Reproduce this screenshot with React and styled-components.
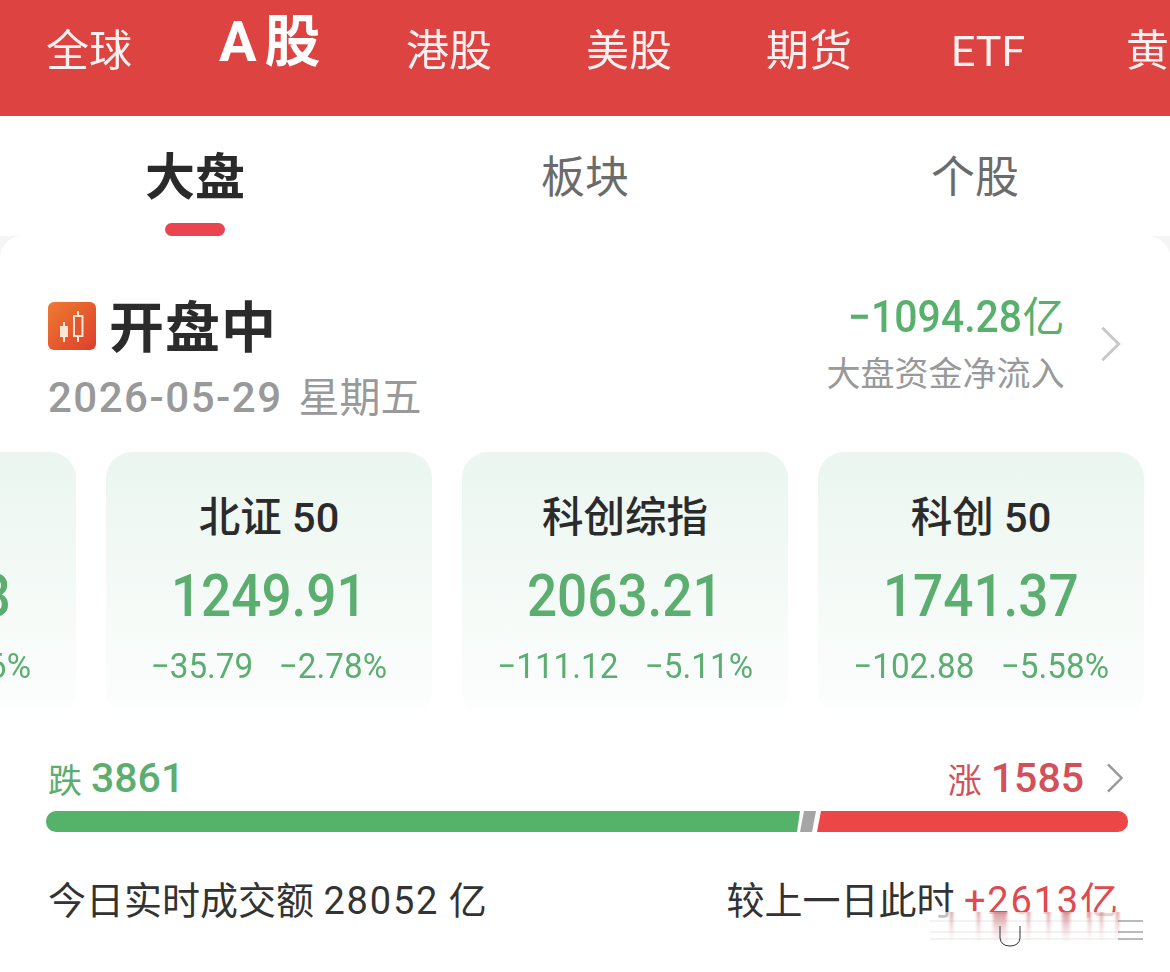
import React from 'react';
import styled, { createGlobalStyle } from 'styled-components';

const GlobalStyle = createGlobalStyle`
  html, body { margin: 0; padding: 0; background: #f5f5f5; }
  body { font-family: "Roboto", "Noto Sans CJK SC", sans-serif; }
  #root { width: 1170px; height: 972px; overflow: hidden; }
`;

const Page = styled.div`
  width: 1170px;
  height: 972px;
  overflow: hidden;
  background: #f5f5f5;
`;

const Market = styled.div`
  height: 116px;
  box-sizing: border-box;
  background: #dc4341;
  display: flex;
  align-items: center;
  padding: 0 0 14px 46px;
  white-space: nowrap;
`;

const MarketTab = styled.div`
  flex: 0 0 auto;
  width: ${(p) => p.$w}px;
  color: #fff;
  font-size: ${(p) => (p.$on ? 56 : 43)}px;
  font-weight: ${(p) => (p.$on ? 700 : 400)};
  word-spacing: ${(p) => (p.$on ? -6 : 0)}px;
  line-height: 1;
  margin-top: ${(p) => (p.$on ? -18 : 0)}px;
  opacity: ${(p) => (p.$on ? 1 : 0.92)};
`;

const SubTabs = styled.div`
  height: 120px;
  background: #fff;
  display: grid;
  grid-template-columns: 390px 390px 390px;
`;

const SubTab = styled.div`
  position: relative;
  display: flex;
  justify-content: center;
  padding-top: 37px;
  font-size: ${(p) => (p.$on ? 50 : 44)}px;
  line-height: 50px;
  font-weight: ${(p) => (p.$on ? 700 : 400)};
  color: ${(p) => (p.$on ? '#2a2a2a' : '#6b6b6b')};
`;

const SubMark = styled.span`
  position: absolute;
  left: 165px;
  top: 107px;
  width: 60px;
  height: 13px;
  border-radius: 7px;
  background: #e9444f;
`;

const Card = styled.div`
  position: relative;
  height: 736px;
  background: #fff;
  border-radius: 22px 22px 0 0;
  overflow: hidden;
`;

const Head = styled.div`
  display: flex;
  justify-content: space-between;
  padding: 60px 48px 0 48px;
  height: 216px;
  box-sizing: border-box;
`;

const TitleRow = styled.div`
  display: flex;
  align-items: center;
  height: 64px;
  gap: 13px;
`;

const IconSlot = styled.span`
  display: flex;
  margin-bottom: 4px;
`;

const Title = styled.div`
  font-size: 55px;
  font-weight: 700;
  line-height: 64px;
  letter-spacing: 1px;
  color: #2b2b2b;
`;

const DateLine = styled.div`
  display: flex;
  align-items: center;
  gap: 16px;
  margin-top: 15px;
  line-height: 46px;
  color: #999;
`;

const DateNum = styled.span`
  font-size: 42px;
  font-weight: 500;
  letter-spacing: 1.5px;
`;

const DateDay = styled.span`
  font-size: 41px;
`;

const FlowBox = styled.div`
  display: flex;
  align-items: center;
  align-self: flex-start;
  height: 96px;
  gap: 36px;
`;

const FlowText = styled.div`
  text-align: right;
`;

const FlowNum = styled.div`
  font-size: 44px;
  font-weight: 500;
  line-height: 48px;
  white-space: nowrap;
  color: #58b06c;
`;

const FlowUnit = styled.span`
  font-size: 42px;
  font-weight: 400;
`;

const FlowLabel = styled.div`
  font-size: 34px;
  line-height: 44px;
  margin-top: 10px;
  color: #999;
`;

// digits in the reference are a narrow DIN-like face
const Narrow = styled.span`
  display: inline-block;
  transform: scaleX(${(p) => p.$x});
  transform-origin: ${(p) => p.$origin || 'center'};
`;

const Indices = styled.div`
  display: flex;
  gap: 30px;
  margin-left: -250px;
  height: 266px;
`;

const IndexCard = styled.div`
  flex: 0 0 326px;
  height: 266px;
  border-radius: 26px;
  background: linear-gradient(180deg, #ebf6f0 0%, #fbfdfc 92%, #ffffff 100%);
  text-align: center;
  box-sizing: border-box;
  padding-top: 41px;
`;

const IndexName = styled.div`
  font-size: 41.5px;
  font-weight: 500;
  line-height: 50px;
  color: #2b2b2b;
`;

const IndexValue = styled.div`
  font-size: 59px;
  font-weight: 500;
  line-height: 62px;
  margin-top: 22px;
  color: #5bae70;
`;

const IndexDelta = styled.div`
  display: flex;
  justify-content: center;
  gap: 20px;
  margin-top: 20px;
  font-size: 35px;
  line-height: 40px;
  color: #5bae70;
  white-space: nowrap;
`;

const CountRow = styled.div`
  display: flex;
  justify-content: space-between;
  align-items: center;
  margin-top: 35px;
  height: 50px;
  padding: 0 46px 0 48px;
`;

const Count = styled.div`
  display: flex;
  align-items: center;
  gap: 9px;
  color: ${(p) => p.$color};
`;

const CountLabel = styled.span`
  font-size: 34px;
`;

const CountNum = styled.span`
  font-size: 41px;
  font-weight: 500;
`;

const CountArrow = styled.span`
  display: flex;
  margin-left: 13px;
`;

const Bar = styled.div`
  display: flex;
  height: 21px;
  margin: 8px 42px 0 46px;
`;

const Fall = styled.div`
  width: 754px;
  background: #55b269;
  border-radius: 10px 0 0 10px;
  clip-path: polygon(0 0, 100% 0, calc(100% - 3px) 100%, 0 100%);
`;

const Flat = styled.div`
  width: 16px;
  background: #a5a5a5;
  clip-path: polygon(4px 0, 100% 0, 12px 100%, 0 100%);
`;

const Rise = styled.div`
  flex: 1;
  margin-left: 1px;
  background: #ec4646;
  border-radius: 0 10px 10px 0;
  clip-path: polygon(4px 0, 100% 0, 100% 100%, 0 100%);
`;

const Turnover = styled.div`
  display: flex;
  justify-content: space-between;
  margin-top: 44px;
  padding: 0 52px 0 48px;
  font-size: 38px;
  line-height: 50px;
  color: #333;
  white-space: nowrap;
`;

const Digits = styled.span`
  letter-spacing: 1.8px;
`;

const Delta = styled.span`
  color: #df4a50;
`;

const Watermark = styled.svg`
  position: absolute;
  left: 930px;
  top: 672px;
`;

function Chevron({ size, color }) {
  return (
    <svg width={size * 0.6} height={size} viewBox="0 0 18 32" fill="none">
      <path d="M1.500 1.500 L16 16 L1.500 30.500" stroke={color} strokeWidth="2.6" />
    </svg>
  );
}

function CandleIcon() {
  return (
    <svg width="48" height="48" viewBox="0 0 48 48">
      <defs>
        <linearGradient id="candle" x1="0" y1="0" x2="1" y2="1">
          <stop offset="0" stopColor="#ef7a30" />
          <stop offset="1" stopColor="#dc3f2c" />
        </linearGradient>
      </defs>
      <rect width="48" height="48" rx="6" fill="url(#candle)" />
      <path d="M16 20v20M30 9v31" stroke="#ffe6d2" strokeWidth="2" />
      <rect x="12" y="24" width="8" height="11" fill="#ffe6d2" />
      <rect x="26" y="14" width="8.500" height="20" fill="#e3552f" stroke="#ffe6d2" strokeWidth="2" />
    </svg>
  );
}

// smeared bottom edge of the last text line and the torn watermark
const streaks = [[20, 3], [47, 3], [63, 14], [97, 3], [117, 3], [132, 8], [158, 3], [170, 3], [186, 3]];

function WatermarkSmear() {
  return (
    <Watermark width="216" height="42" viewBox="0 0 216 42">
      <defs>
        <linearGradient id="smear" x1="0" y1="0" x2="0" y2="1">
          <stop offset="0" stopColor="#cf8185" stopOpacity="0.85" />
          <stop offset="1" stopColor="#e9c9cb" stopOpacity="0" />
        </linearGradient>
        <filter id="soft" x="-20%" y="-20%" width="140%" height="140%">
          <feGaussianBlur stdDeviation="1.400 0.400" />
        </filter>
      </defs>
      <rect x="0" y="4" width="212" height="33" fill="#fff" fillOpacity="0.7" />
      <path d="M0 13h188M0 24h188M0 31h188" stroke="#f4f2f2" strokeWidth="2" />
      <g filter="url(#soft)">
        {streaks.map(([x, w]) => (
          <rect key={x} x={x} y="4" width={w} height="32" fill="url(#smear)" />
        ))}
      </g>
      <path d="M70 18v12q1 8 10 8t10-8v-12" stroke="#333" strokeWidth="1" fill="none" />
      <path d="M188 13h25M188 24h25M188 31h25" stroke="#777" strokeWidth="1.200" />
    </Watermark>
  );
}

const markets = [
  ['全球', 173],
  ['A 股', 187, true],
  ['港股', 180],
  ['美股', 180],
  ['期货', 185],
  ['ETF', 175],
  ['黄', 60],
];

const indices = [
  ['创业板指', '3263.48', '−98.36', '−5.36%'],
  ['北证 50', '1249.91', '−35.79', '−2.78%'],
  ['科创综指', '2063.21', '−111.12', '−5.11%'],
  ['科创 50', '1741.37', '−102.88', '−5.58%'],
];

export default function App() {
  return (
    <Page>
      <GlobalStyle />
      <Market>
        {markets.map(([name, w, on]) => (
          <MarketTab key={name} $w={w} $on={on}>{name}</MarketTab>
        ))}
      </Market>
      <SubTabs>
        <SubTab $on>大盘<SubMark /></SubTab>
        <SubTab>板块</SubTab>
        <SubTab>个股</SubTab>
      </SubTabs>
      <Card>
        <Head>
          <div>
            <TitleRow>
              <IconSlot><CandleIcon /></IconSlot>
              <Title>开盘中</Title>
            </TitleRow>
            <DateLine>
              <DateNum>2026-05-29</DateNum>
              <DateDay>星期五</DateDay>
            </DateLine>
          </div>
          <FlowBox>
            <FlowText>
              <FlowNum>
                <Narrow $x={0.93} $origin="right">−1094.28</Narrow>
                <FlowUnit>亿</FlowUnit>
              </FlowNum>
              <FlowLabel>大盘资金净流入</FlowLabel>
            </FlowText>
            <Chevron size={36} color="#c8c8c8" />
          </FlowBox>
        </Head>
        <Indices>
          {indices.map(([name, value, change, pct]) => (
            <IndexCard key={name}>
              <IndexName>{name}</IndexName>
              <IndexValue><Narrow $x={0.9}>{value}</Narrow></IndexValue>
              <IndexDelta>
                <Narrow $x={0.95}>{change}</Narrow>
                <Narrow $x={0.95}>{pct}</Narrow>
              </IndexDelta>
            </IndexCard>
          ))}
        </Indices>
        <CountRow>
          <Count $color="#5bae70">
            <CountLabel>跌</CountLabel>
            <CountNum>3861</CountNum>
          </Count>
          <Count $color="#d2505a">
            <CountLabel>涨</CountLabel>
            <CountNum>1585</CountNum>
            <CountArrow><Chevron size={30} color="#999" /></CountArrow>
          </Count>
        </CountRow>
        <Bar>
          <Fall />
          <Flat />
          <Rise />
        </Bar>
        <Turnover>
          <span>今日实时成交额 <Digits>28052</Digits> 亿</span>
          <span>较上一日此时 <Delta><Digits>+2613</Digits>亿</Delta></span>
        </Turnover>
        <WatermarkSmear />
      </Card>
    </Page>
  );
}
